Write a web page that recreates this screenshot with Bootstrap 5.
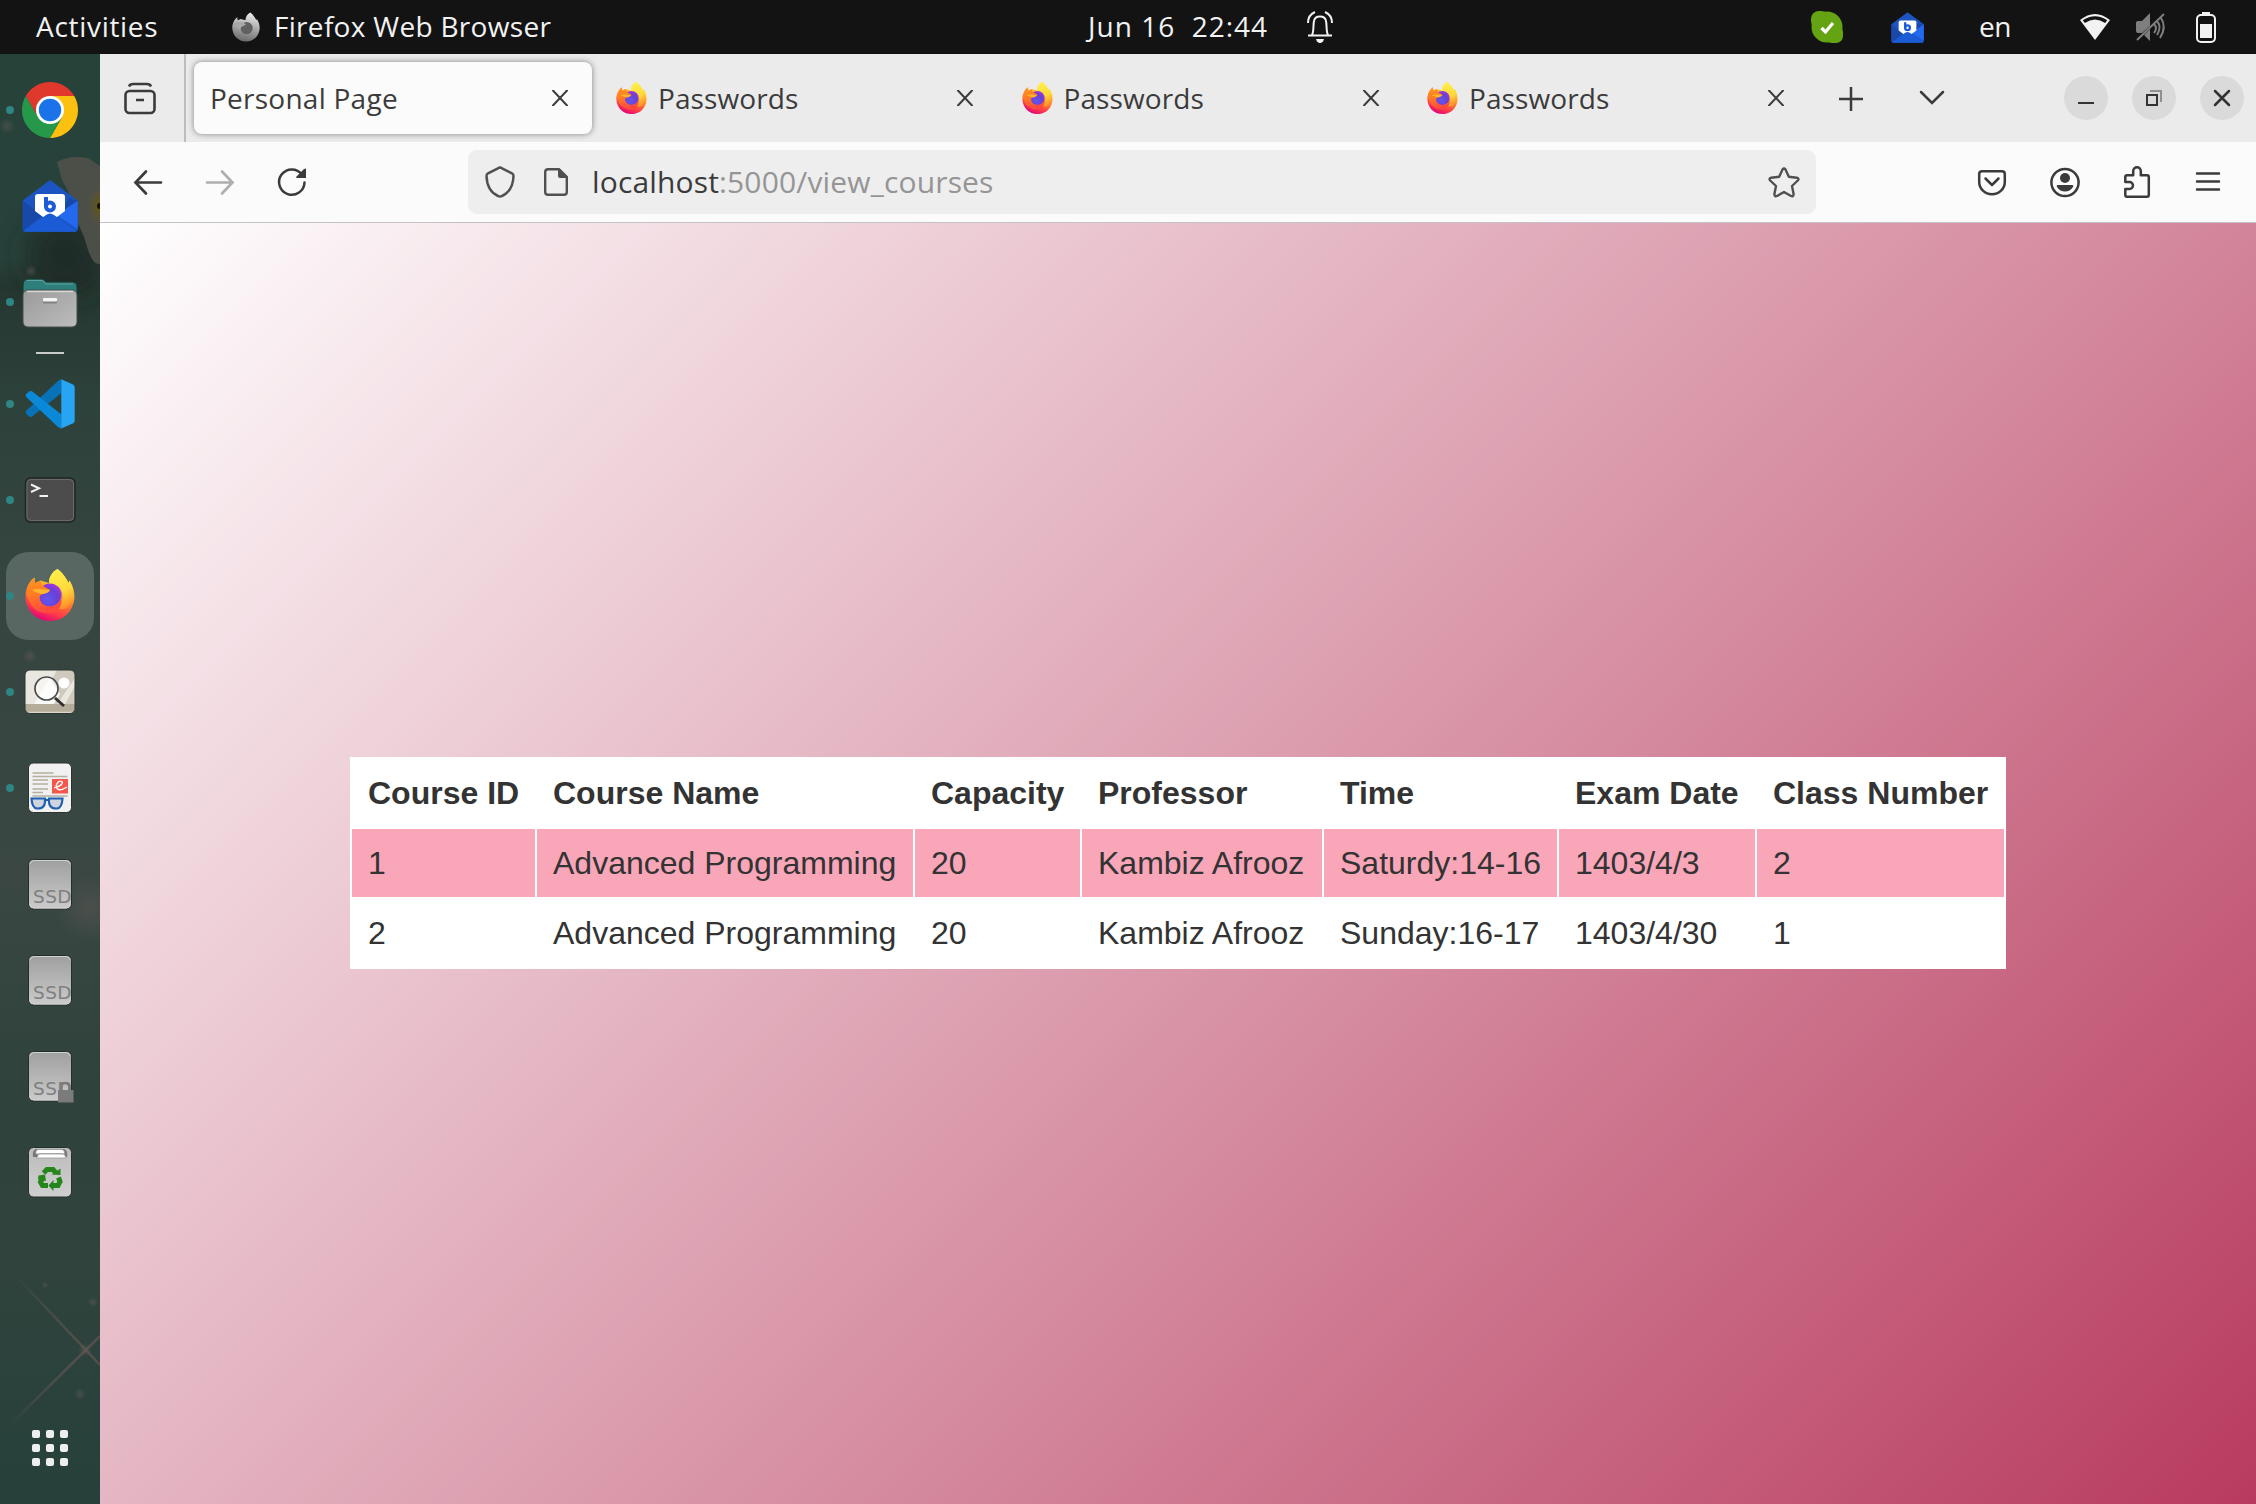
<!DOCTYPE html>
<html lang="en">
<head>
<meta charset="utf-8">
<title>Personal Page</title>
<link href="https://cdn.jsdelivr.net/npm/bootstrap@5.3.0/dist/css/bootstrap.min.css" rel="stylesheet">
<style>
  body { width: 2256px; height: 1504px; overflow: hidden; font-family: "Open Sans", "Noto Sans", sans-serif; font-size: 28px; line-height: 36px; color: #3b3b3b; }
  svg { display: block; flex: none; overflow: visible; }
  .panel { height: 54px; background: #131313; color: #f2f2f2; flex: none; }
  .label { white-space: pre; flex: none; display: block; }
  .panel .label { margin-top: -2px; }
  .dock { width: 100px; flex: none; background: linear-gradient(180deg, #264239 0, #28423b 14%, #253730 16%, #2d423b 24%, #34443e 34%, #3a4743 57%, #2f423c 72%, #30433d 84%, #26403a 100%); }
  .dock-item { height: 96px; flex: none; }
  .wallpaper { position: absolute; left: 0; top: 0; }
  .running::before { content: ""; position: absolute; left: 6px; width: 8px; height: 8px; border-radius: 50%; background: #2e8583; z-index: 2; }
  .focused { width: 88px; height: 88px; border-radius: 22px; background: #596762; }
  .dock-rule { height: 6px; flex: none; }
  .dock-rule i { width: 28px; height: 2px; background: #c8ccca; }
  .tabstrip { height: 88px; background: #ebebeb; flex: none; }
  .tabview { width: 86px; border-right: 2px solid #bdbdbd; padding-right: 4px; }
  .browser-tab { width: 405.5px; height: 72px; flex: none; }
  .browser-tab .label { letter-spacing: .1px; }
  .browser-tab.current { width: 398px; margin: 0 7px 0 8px; border-radius: 8px; background: #fbfbfb; box-shadow: 0 0 6px rgba(0,0,0,.45); }
  .browser-tab.current .label { letter-spacing: .25px; }
  .winbtn { width: 44px; height: 44px; border-radius: 50%; background: #dadada; flex: none; }
  .tools { height: 81px; background: #fbfbfb; border-bottom: 1px solid #c3c3c3; flex: none; }
  .address { width: 1348px; height: 64px; border-radius: 9px; background: #eee; }
  .path-part { color: #959595; }
  .viewport-area { background: linear-gradient(135deg, #ffffff 0%, #b83b5e 100%); }
  .courses { width: 1656px; table-layout: fixed; margin: 0 0 1px 0; border-collapse: collapse; font: 32px/36px "Liberation Sans", Arial, sans-serif; color: #333; background: #fff; }
  .courses th, .courses td { border: 2px solid #fff; padding: 16px; text-align: left; white-space: nowrap; height: 70px; }
  .courses .odd td { background: #f9a6b9; }
</style>
</head>
<body class="d-flex flex-column">

<svg width="0" height="0" class="position-absolute">
  <defs>
    <linearGradient id="fxBody" x1=".75" y1="0" x2=".35" y2="1"><stop offset="0" stop-color="#fff24c"/><stop offset=".3" stop-color="#ffc42e"/><stop offset=".55" stop-color="#ff7a2c"/><stop offset=".8" stop-color="#ff3a48"/><stop offset="1" stop-color="#e0007c"/></linearGradient>
    <radialGradient id="fxGlobe" cx=".4" cy=".7" r=".8"><stop offset="0" stop-color="#6157ee"/><stop offset=".6" stop-color="#6a3fd6"/><stop offset="1" stop-color="#b833e1"/></radialGradient>
    <linearGradient id="fxHead" x1="0" y1="0" x2=".3" y2="1"><stop offset="0" stop-color="#ff9a1f"/><stop offset=".5" stop-color="#ff7a24"/><stop offset="1" stop-color="#ff4a3e"/></linearGradient>
    <linearGradient id="fxTail" x1=".3" y1="0" x2=".6" y2="1"><stop offset="0" stop-color="#fff04a"/><stop offset=".6" stop-color="#ffd83a"/><stop offset="1" stop-color="#ff8a2c"/></linearGradient>
    <symbol id="fox" viewBox="0 0 50 52">
      <path fill="url(#fxBody)" d="M32.500 0C38 4 41 9 43.500 14L44.500 11.500C50 20 51 30 47 38C43 47 34.500 52 25 52C11 52 .5 41 .5 27.500C.5 20 4 12 9.500 8.500L10 14L15.500 11.500L24 14C24 8 27 3 32.500 0Z"/>
      <path fill="url(#fxTail)" d="M32.500 0C38 4 41 9 43.500 14L44.500 11.500C49 20 49 31 44 37C41 41 37 41 33 39C39 33 39 25 35 19C31 15 25 16 24 14C24 8 27 3 32.500 0Z"/>
      <circle cx="25" cy="26" r="11.500" fill="url(#fxGlobe)"/>
      <path fill="url(#fxHead)" d="M1 25C2 17 5 12 9.500 8.500L10 14Q13 14 15.500 11.500L16.500 16Q21 19 25 20.500Q24 23 19 24.500Q13 26 15 31Q17 37 24 37.500Q32 37.500 36 30Q38 40 27 44Q13 46 6 36Z"/>
      <path fill="#ffb52e" d="M7 21Q15 19 25 21.500Q23 24 18 25Q13 25 7 21Z"/>
    </symbol>
    <symbol id="foxgray" viewBox="0 0 50 52">
      <linearGradient id="fgA" x1=".6" y1="0" x2=".4" y2="1"><stop offset="0" stop-color="#ededed"/><stop offset=".5" stop-color="#aaa"/><stop offset="1" stop-color="#696969"/></linearGradient>
      <path fill="url(#fgA)" d="M32.500 0C38 4 41 9 43.500 14L44.500 11.500C50 20 51 30 47 38C43 47 34.500 52 25 52C11 52 .5 41 .5 27.500C.5 20 4 12 9.500 8.500L10 14L15.500 11.500L24 14C24 8 27 3 32.500 0Z"/>
      <circle cx="26" cy="28" r="11" fill="#606060"/>
      <path fill="#a8a8a8" d="M3 18L16 16Q21 19 25 20.500Q24 23 19 24.500Q14 27 15 32Q9 28 3 18Z"/>
    </symbol>
    <symbol id="bmail" viewBox="0 0 56 56">
      <path fill="#1c54c2" d="M28 2L55.700 22.500V51Q55.700 53.700 53 53.700H3.500Q.7 53.700 .7 51V22.500Z"/>
      <path fill="#1848a8" d="M.7 22.500L20 38 .7 53ZM55.700 22.500L36 38 47 20Z"/>
      <path fill="#2369f0" d="M55.700 23V51L34 37Z"/>
      <path fill="#fff" d="M16 16H40Q43 16 43 19V33L35 39H21L13 33V19Q13 16 16 16Z"/>
      <path fill="#1c5bd6" d="M2 53L24 37Q28 34 32 37L54.500 53Q54 53.700 53 53.700H3.500Z"/>
      <path fill="none" stroke="#1c5bd6" stroke-width="4" d="M24 19V29"/>
      <circle cx="28" cy="28.500" r="4" fill="none" stroke="#1c5bd6" stroke-width="4"/>
    </symbol>
    <symbol id="closex" viewBox="0 0 16 16"><path d="M1 .5L15 15.500M15 .5L1 15.500" fill="none" stroke="#3b3b3b" stroke-width="2" stroke-linecap="round"/></symbol>
    <linearGradient id="ssdFill" x1="0" y1="0" x2="0" y2="1"><stop offset="0" stop-color="#9f9f9f"/><stop offset="1" stop-color="#cbcbcb"/></linearGradient>
    <symbol id="ssd" viewBox="0 0 56 56">
      <rect x="6.500" y="3.500" width="43" height="49.500" rx="5" fill="url(#ssdFill)" stroke="#222e2a" stroke-width="1"/>
      <path d="M8 8Q8 5 12 4.500H44Q48 5 48 8M8 48Q8 52 12 52H44Q48 52 48 48" fill="none" stroke="#d2d2d2"/>
      <text x="11" y="47" font-family="DejaVu Sans" font-size="18.500" fill="#7f7f7f" textLength="38.500">SSD</text>
    </symbol>
  </defs>
</svg>

<header class="panel d-flex align-items-center">
  <div class="label" style="margin-left:36px;width:196px;letter-spacing:.7px">Activities</div>
  <svg width="28" height="30"><use href="#foxgray"/></svg>
  <div class="label" style="margin-left:14px;width:814px;letter-spacing:.3px">Firefox Web Browser</div>
  <div class="label" style="width:219px;letter-spacing:1px">Jun 16  22:44</div>
  <svg width="26" height="32" viewBox="0 0 26 32" fill="none" stroke="#f2f2f2" stroke-width="2"><path d="M5 24C7 21 6 14 7 10C8 4 18 4 19 10C20 14 19 21 21 24M1 24.500H25M1 12Q1 4 8 1M25 12Q25 4 18 1"/><path d="M9 28H17Q16 32 13 32T9 28Z" fill="#f2f2f2" stroke="none"/></svg>
  <svg width="32" height="32" viewBox="0 0 32 32" style="margin-left:478px"><g fill="#64a312"><circle cx="16" cy="16" r="15.500"/><rect width="18" height="18" rx="8"/><rect x="14" y="14" width="18" height="18" rx="7"/></g><path d="M10.500 17L14.500 21 22 12" fill="none" stroke="#fff" stroke-width="3.200"/></svg>
  <svg width="33" height="33" style="margin-left:48px"><use href="#bmail"/></svg>
  <div class="label" style="margin-left:55px;width:100px;letter-spacing:-.5px">en</div>
  <svg width="32" height="26" viewBox="0 0 32 26" fill="#f2f2f2"><path d="M16 26L1 6Q16-6 31 6ZM3.800 6.300L5.800 9Q16 2 26.200 9L28.200 6.300Q16-2 3.800 6.300Z" fill-rule="evenodd"/></svg>
  <svg width="30" height="28" viewBox="0 0 30 28" style="margin-left:25px" fill="none" stroke="#7e7e7e" stroke-width="2"><path fill="#7e7e7e" stroke="none" d="M0 10Q0 8 2 8H6L14 0V13L6 20H2Q0 20 0 18ZM8 22L14 16V28Z"/><path d="M1 27L28 1M18 11Q22 15 18 20M21 8Q26 14 21 22M25 5Q31 14 24 25"/></svg>
  <svg width="20" height="31" viewBox="0 0 20 31" style="margin-left:30px"><rect x="1" y="3" width="18" height="27" rx="4" fill="none" stroke="#f2f2f2" stroke-width="2"/><path fill="#f2f2f2" d="M6 0H14V3H6ZM4 12H16V26H4Z"/></svg>
</header>

<div class="d-flex flex-grow-1">
  <nav class="dock position-relative d-flex flex-column pt-2">
    <svg class="wallpaper" width="100" height="1450" viewBox="0 54 100 1450" style="overflow:hidden">
      <defs>
        <filter id="soft" x="-50%" y="-50%" width="200%" height="200%"><feGaussianBlur stdDeviation="14"/></filter>
        <radialGradient id="glint"><stop offset="0" stop-color="#6b5f5e" stop-opacity=".45"/><stop offset="1" stop-color="#6b5f5e" stop-opacity="0"/></radialGradient>
        <radialGradient id="pollen"><stop offset="0" stop-color="#6a5400"/><stop offset="1" stop-color="#5c563f" stop-opacity="0"/></radialGradient>
        <linearGradient id="rayA" gradientUnits="userSpaceOnUse" x1="15" y1="1275" x2="150" y2="1420"><stop offset="0" stop-color="#665957" stop-opacity="0"/><stop offset=".5" stop-color="#544f4c"/><stop offset="1" stop-color="#544f4c"/></linearGradient>
        <linearGradient id="rayB" gradientUnits="userSpaceOnUse" x1="10" y1="1425" x2="100" y2="1337"><stop offset="0" stop-color="#665957" stop-opacity="0"/><stop offset=".8" stop-color="#544f4c"/></linearGradient>
      </defs>
      <ellipse cx="66" cy="255" rx="40" ry="40" fill="#1a2622" opacity=".8" filter="url(#soft)"/>
      <path fill="#4c4f48" d="M57 162Q70 155 88 158L100 166V264Q93 265 88 250Q82 228 76 222Q72 195 62 180Z"/>
      <ellipse cx="100" cy="206" rx="13" ry="22" fill="url(#pollen)"/>
      <circle cx="100" cy="206" r="3" fill="#140e05"/>
      <circle cx="7" cy="126" r="8" fill="url(#glint)"/><circle cx="31" cy="271" r="6" fill="url(#glint)"/><circle cx="30" cy="656" r="7" fill="url(#glint)"/>
      <circle cx="90" cy="908" r="34" fill="url(#glint)" opacity=".8"/>
      <circle cx="93" cy="1302" r="5" fill="url(#glint)"/><circle cx="45" cy="1285" r="3" fill="url(#glint)"/><circle cx="80" cy="1394" r="6" fill="url(#glint)"/>
      <path d="M15 1275L100 1365" stroke="url(#rayA)" stroke-width="2.500"/><path d="M10 1425L100 1336" stroke="url(#rayB)" stroke-width="2.500"/>
      <circle cx="85" cy="1350" r="7" fill="url(#glint)"/>
    </svg>

    <div class="dock-item running position-relative d-flex align-items-center justify-content-center">
      <svg width="56" height="56"><path fill="#e0382d" d="M3.750 14A28 28 0 0 1 52.250 14H28L15.900 35Z"/><path fill="#fcc010" d="M28 14H52.250A28 28 0 0 1 28 56L40.100 35Z"/><path fill="#26984a" d="M3.750 14A28 28 0 0 0 28 56L40.100 35H15.900Z"/><circle cx="28" cy="28" r="14" fill="#fff"/><circle cx="28" cy="28" r="11.200" fill="#1a73e8"/></svg>
    </div>
    <div class="dock-item position-relative d-flex align-items-center justify-content-center">
      <svg width="56" height="56"><use href="#bmail"/></svg>
    </div>
    <div class="dock-item running position-relative d-flex align-items-center justify-content-center">
      <svg width="56" height="56"><defs><linearGradient id="fld" x1="0" y1="0" x2="1" y2="1"><stop offset="0" stop-color="#9a9a9a"/><stop offset="1" stop-color="#bdbdbd"/></linearGradient></defs>
        <path fill="#2d7f7b" stroke="#1d3732" d="M1 12Q1 5 6 5H20Q22 5 24 8H50Q55 8 55 13V30H1Z"/><path d="M5 6.500H20L24 10H51" fill="none" stroke="#60a39e"/><rect x="1" y="16" width="54" height="37" rx="5" fill="url(#fld)" stroke="#454f4c"/><path d="M5 17.500H51" stroke="#d5d5d5" stroke-width="1.500"/><rect x="21" y="26" width="14" height="3.500" rx="1" fill="#818181"/><rect x="21" y="24" width="14" height="3.500" rx="1" fill="#f4f4f4"/></svg>
    </div>
    <div class="dock-rule position-relative d-flex align-items-center justify-content-center"><i></i></div>
    <div class="dock-item running position-relative d-flex align-items-center justify-content-center">
      <svg width="56" height="56"><path fill="#0872b9" d="M39.500 3.300V17L10 40.500Q8 41.500 6.500 40L4 37.500Q3 36 4.500 34.500L36 5Q37.500 3.500 39.500 3.300Z"/><path fill="#0a89d8" d="M39.500 52.500V38.500L10 15.300Q8 14.500 6.500 16L4 18.300Q3 20 4.500 21.300L36 51Q37.500 52.300 39.500 52.500Z"/><path fill="#27a5f2" d="M39.300 3.300L51 8.500Q52.700 9.500 52.700 11V45Q52.700 46.500 51 47.300L39.300 52.500Z"/></svg>
    </div>
    <div class="dock-item running position-relative d-flex align-items-center justify-content-center">
      <svg width="56" height="56"><rect x="3.500" y="6" width="49.500" height="44" rx="5" fill="#4c4c4c" stroke="#1f2725" stroke-width="1.500"/><rect x="5" y="7.500" width="46.500" height="41" rx="4" fill="none" stroke="#696969"/><path d="M9 12.500L17 16.300 9 20" fill="none" stroke="#f2f2f2" stroke-width="2"/><path d="M17.500 24H26" stroke="#f2f2f2" stroke-width="2"/></svg>
    </div>
    <div class="dock-item running position-relative d-flex align-items-center justify-content-center">
      <div class="focused d-flex align-items-center justify-content-center"><svg width="50" height="52" style="margin-bottom:2px"><use href="#fox"/></svg></div>
    </div>
    <div class="dock-item running position-relative d-flex align-items-center justify-content-center">
      <svg width="56" height="56"><defs><clipPath id="pic"><rect x="3" y="6" width="50" height="43.500" rx="5"/></clipPath></defs>
        <g clip-path="url(#pic)"><path fill="#e9e7df" d="M3 6H53V50H3Z"/><path fill="#cfcabd" d="M35 6H53V14L34 42H16ZM53 22V42H42Z"/><path fill="#f8f8f6" d="M12 40L28 14 38 30 32 40Z"/><path fill="#b5ad9a" d="M3 40H53V50H3Z"/><path d="M4 48.500H52" stroke="#ddd8ca" stroke-width="1.500"/></g>
        <rect x="3" y="6" width="50" height="43.500" rx="5" fill="none" stroke="#2b3632"/><circle cx="42" cy="19" r="5.500" fill="#fff"/><circle cx="24.500" cy="24.500" r="11.500" fill="#fff" fill-opacity=".55" stroke="#4b4b4b" stroke-width="1.700"/><path d="M33 34L42 42" stroke="#2e2e2e" stroke-width="3"/></svg>
    </div>
    <div class="dock-item running position-relative d-flex align-items-center justify-content-center">
      <svg width="56" height="56"><rect x="6.500" y="3" width="43" height="49.500" rx="5" fill="#f1f1f1" stroke="#29332f"/><path d="M10.500 13H31.500M10.500 16.500H45.500M10.500 20H26M10.500 24H26M10.500 29H26M10.500 32.500H21M10.500 36H45.500" stroke="#b5af9f" stroke-width="1.500"/><rect x="30" y="19" width="16" height="14.500" fill="#f5574a"/><path d="M32 28Q42 25 40 21.500Q36 20 34 26Q35 33 45 27" fill="none" stroke="#fff" stroke-width="1.300"/><path fill="#cfd5dc" stroke="#1f5fb4" stroke-width="2.200" d="M9.500 38.500H23Q24 49 15 48.500Q10 48 9.500 38.500ZM27 38.500H40.500Q40 48 35 48.500Q26 49 27 38.500ZM23 40H27"/></svg>
    </div>
    <div class="dock-item position-relative d-flex align-items-center justify-content-center"><svg width="56" height="56"><use href="#ssd"/></svg></div>
    <div class="dock-item position-relative d-flex align-items-center justify-content-center"><svg width="56" height="56"><use href="#ssd"/></svg></div>
    <div class="dock-item position-relative d-flex align-items-center justify-content-center"><svg width="56" height="56"><use href="#ssd"/><rect x="36" y="42" width="15.500" height="12.500" fill="#7b7b7b"/><path d="M39.500 43V38Q39.500 35 43.500 35T47.500 38V43" fill="none" stroke="#7b7b7b" stroke-width="2.500"/></svg></div>
    <div class="dock-item position-relative d-flex align-items-center justify-content-center">
      <svg width="56" height="56"><defs><linearGradient id="bin" x1="0" y1="0" x2="0" y2="1"><stop offset="0" stop-color="#bcbcbc"/><stop offset="1" stop-color="#cfcfcf"/></linearGradient></defs><rect x="6.500" y="3.500" width="43" height="49.500" rx="5" fill="url(#bin)" stroke="#26302c"/><path fill="#777" d="M11 13Q10 6 14 5H42Q46 6 45 13Z"/><path fill="#fff" stroke="#999" stroke-width=".8" d="M14 10Q13 5.500 17 5.500H39Q43 5.500 42.500 10ZM15.500 13Q16 8.500 18 9.500H40Q43 9.500 44 14H14Z"/>
        <path fill="none" stroke="#25861c" stroke-width="5" d="M21.500 29L25 25.500H31L34 29M36.500 33.500L38 37.500 36 41.500H30.500M26 41.500H20.500L18.500 38 20.500 34.500"/><path fill="#25861c" d="M29.500 30.500L38.500 31 38.500 24.500ZM31.500 36V47L26.500 41.500ZM16 35.500L24 37 23 30.500 16.500 31.500Z"/></svg>
    </div>
    <div class="dock-item position-relative d-flex align-items-center justify-content-center mt-auto mb-2">
      <svg width="36" height="36" fill="#eee"><g id="gridrow"><rect width="8" height="8" rx="2"/><rect x="14" width="8" height="8" rx="2"/><rect x="28" width="8" height="8" rx="2"/></g><use href="#gridrow" y="14"/><use href="#gridrow" y="28"/></svg>
    </div>
  </nav>

  <section class="d-flex flex-column flex-grow-1">
    <div class="tabstrip d-flex align-items-center">
      <div class="tabview h-100 d-flex align-items-center justify-content-center flex-shrink-0">
        <svg width="32" height="32" viewBox="0 0 32 32" fill="none" stroke="#3b3b3b" stroke-width="2.600"><rect x="1.500" y="9" width="29" height="22" rx="4"/><path d="M5 4.500Q6 2 9 2H23Q26 2 27 4.500M12 18H20"/></svg>
      </div>
      <div class="browser-tab current d-flex align-items-center">
        <div class="label" style="margin-left:16px;width:342px">Personal Page</div>
        <svg width="16" height="16"><use href="#closex"/></svg>
      </div>
      <div class="browser-tab d-flex align-items-center">
        <svg width="31" height="32" style="margin-left:17px"><use href="#fox"/></svg>
        <div class="label" style="margin-left:11px;width:299px">Passwords</div>
        <svg width="16" height="16"><use href="#closex"/></svg>
      </div>
      <div class="browser-tab d-flex align-items-center">
        <svg width="31" height="32" style="margin-left:17px"><use href="#fox"/></svg>
        <div class="label" style="margin-left:11px;width:299px">Passwords</div>
        <svg width="16" height="16"><use href="#closex"/></svg>
      </div>
      <div class="browser-tab d-flex align-items-center">
        <svg width="31" height="32" style="margin-left:17px"><use href="#fox"/></svg>
        <div class="label" style="margin-left:11px;width:299px">Passwords</div>
        <svg width="16" height="16"><use href="#closex"/></svg>
      </div>
      <svg width="24" height="24" viewBox="0 0 24 24" style="margin-left:23px" stroke="#3b3b3b" stroke-width="2.500"><path d="M0 13H24M12 1V25"/></svg>
      <svg width="24" height="14" viewBox="0 0 24 14" style="margin-left:57px" fill="none" stroke="#3b3b3b" stroke-width="2.500" stroke-linecap="round"><path d="M1 1L12 12 23 1"/></svg>
      <div class="d-flex ms-auto" style="gap:24px;margin-right:12px">
        <div class="winbtn d-flex align-items-center justify-content-center"><svg width="16" height="16"><path d="M0 13H16" stroke="#333" stroke-width="2"/></svg></div>
        <div class="winbtn d-flex align-items-center justify-content-center"><svg width="16" height="16" fill="none"><path d="M4 1H15V12" stroke="#909090" stroke-width="2"/><rect x="1" y="5" width="10" height="10" stroke="#333" stroke-width="2"/></svg></div>
        <div class="winbtn d-flex align-items-center justify-content-center"><svg width="16" height="16"><path d="M1 1L15 15M15 1L1 15" stroke="#333" stroke-width="2.500" stroke-linecap="round"/></svg></div>
      </div>
    </div>

    <div class="tools d-flex align-items-center">
      <svg width="28" height="24" viewBox="0 0 28 24" style="margin-left:34px" fill="none" stroke="#3b3b3b" stroke-width="2.700" stroke-linecap="round"><path d="M2 12.500H27M12 1.500L1.500 12.500 12 23.500"/></svg>
      <svg width="28" height="24" viewBox="0 0 28 24" style="margin-left:44px" fill="none" stroke="#afafaf" stroke-width="2.700" stroke-linecap="round"><path d="M1 12.500H26M16 1.500L26.500 12.500 16 23.500"/></svg>
      <svg width="28" height="28" viewBox="0 0 28 28" style="margin-left:44px"><path d="M24 6.500A12.700 12.700 0 1 0 26.500 14.500" fill="none" stroke="#3b3b3b" stroke-width="2.500" stroke-linecap="round"/><path fill="#3b3b3b" d="M28 1V10H19Q17.500 9.500 18.500 8.500L26 1Q28 0 28 1Z"/></svg>
      <div class="address d-flex align-items-center" style="margin-left:162px">
        <svg width="30" height="32" viewBox="0 0 30 32" style="margin-left:17px" fill="none" stroke="#505050" stroke-width="2.500" stroke-linejoin="round"><path d="M15 1.500Q16 1.500 17 2.300L27 7.300Q28.500 8 28.500 10Q28 25 17 30Q15 31 13 30Q2 25 1.500 10Q1.500 8 3 7.300L13 2.300Q14 1.500 15 1.500Z"/></svg>
        <svg width="24" height="28" viewBox="0 0 24 28" style="margin-left:29px"><path d="M4 1.200H15L22.800 9V24Q22.800 26.800 20 26.800H4Q1.200 26.800 1.200 24V4Q1.200 1.200 4 1.200Z" fill="none" stroke="#505050" stroke-width="2.400"/><path fill="#505050" d="M14 1H16L23 8V10H16Q14 10 14 8Z"/></svg>
        <div class="label flex-grow-1" style="margin-left:24px;font-size:30px;letter-spacing:.15px">localhost<span class="path-part">:5000/view_courses</span></div>
        <svg width="32" height="31" viewBox="0 0 32 31" style="margin-right:16px" fill="none" stroke="#505050" stroke-width="2.400" stroke-linejoin="round"><path d="M14.500 2.500Q16 .5 17.500 2.500L20.800 9.800 28.800 10.700Q31.500 11.500 29.800 13.500L24 19 25.600 27Q25.500 30 23 29L16 25 9 29Q6.500 30 6.400 27L8 19 2.200 13.500Q.5 11.500 3.200 10.700L11.200 9.800Z"/></svg>
      </div>
      <svg width="28" height="25" viewBox="0 0 28 25" style="margin-left:162px" fill="none" stroke="#3b3b3b" stroke-width="2.500" stroke-linecap="round" stroke-linejoin="round"><path d="M4 1.200H24Q26.800 1.200 26.800 4V12A12.800 12.300 0 0 1 1.200 12V4Q1.200 1.200 4 1.200ZM7.500 8.500L14 15 20.500 8.500"/></svg>
      <svg width="30" height="30" viewBox="0 0 30 30" style="margin-left:44px"><circle cx="15" cy="15.500" r="13.600" fill="none" stroke="#3b3b3b" stroke-width="2.500"/><circle cx="15" cy="11" r="5" fill="#3b3b3b"/><path fill="#3b3b3b" d="M8 18H22Q24 18 23 20Q20 24.500 15 24.500T7 20Q6 18 8 18Z"/></svg>
      <svg width="26" height="32" viewBox="0 0 26 32" style="margin-left:44px" fill="none" stroke="#3b3b3b" stroke-width="2.500" stroke-linejoin="round"><path d="M1.300 16V11Q1.300 9.200 3 9.200H9.200V5A3.800 3.800 0 0 1 16.800 5V9.200H23Q24.800 9.200 24.800 11V29Q24.800 30.800 23 30.800H3Q1.300 30.800 1.300 29V23H5.500A3.500 3.500 0 0 0 5.500 16Z"/></svg>
      <svg width="24" height="20" viewBox="0 0 24 20" style="margin-left:46px" stroke="#3b3b3b" stroke-width="2.500" stroke-linecap="round"><path d="M1 1.500H23M1 9.500H23M1 17.500H23"/></svg>
    </div>

    <main class="viewport-area flex-grow-1 d-flex align-items-center justify-content-center">
      <table class="courses">
        <colgroup><col style="width:185px"><col style="width:378px"><col style="width:167px"><col style="width:242px"><col style="width:235px"><col style="width:198px"><col style="width:249px"></colgroup>
        <thead><tr><th>Course ID</th><th>Course Name</th><th>Capacity</th><th>Professor</th><th>Time</th><th>Exam Date</th><th>Class Number</th></tr></thead>
        <tbody>
          <tr class="odd"><td>1</td><td>Advanced Programming</td><td>20</td><td>Kambiz Afrooz</td><td>Saturdy:14-16</td><td>1403/4/3</td><td>2</td></tr>
          <tr><td>2</td><td>Advanced Programming</td><td>20</td><td>Kambiz Afrooz</td><td>Sunday:16-17</td><td>1403/4/30</td><td>1</td></tr>
        </tbody>
      </table>
    </main>
  </section>
</div>
<script src="https://cdn.jsdelivr.net/npm/bootstrap@5.3.0/dist/js/bootstrap.bundle.min.js"></script>
</body>
</html>
